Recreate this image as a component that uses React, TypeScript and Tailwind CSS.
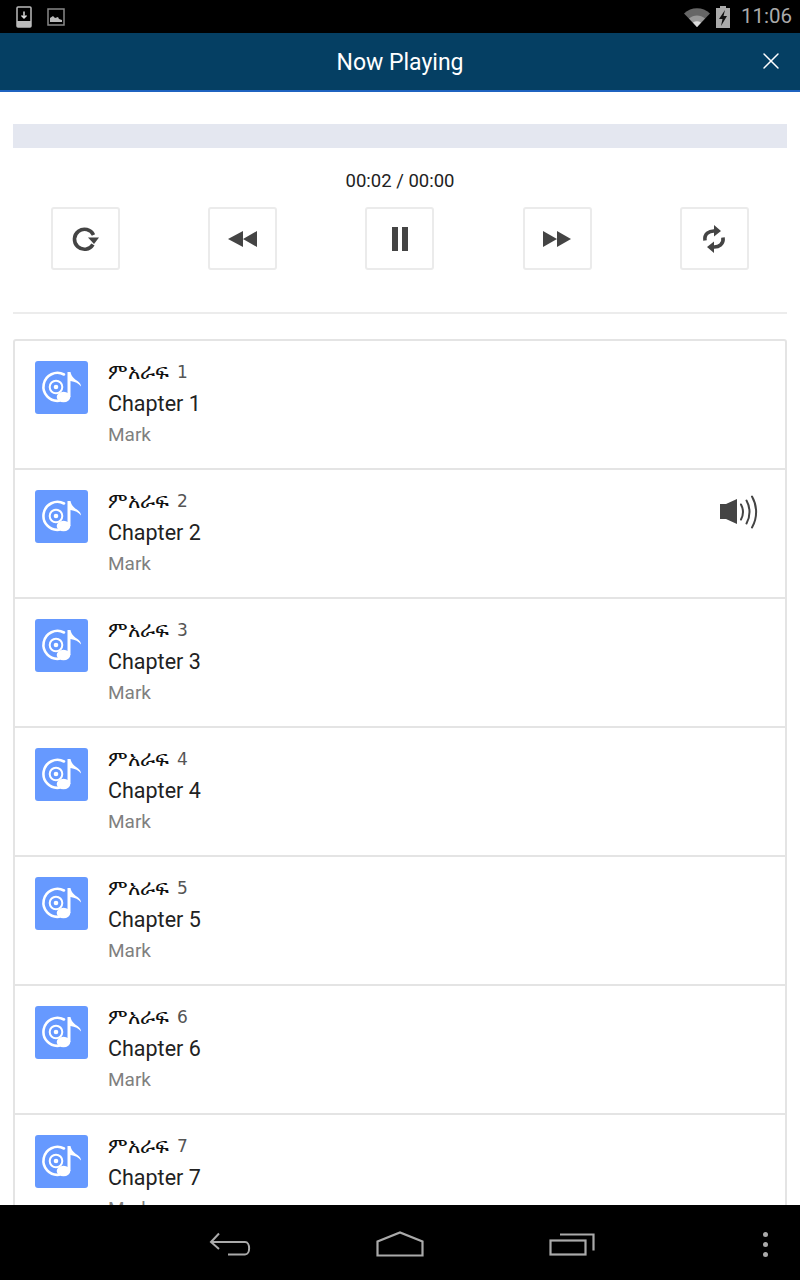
import React from 'react';
import { X } from 'lucide-react';

const chapters = [1, 2, 3, 4, 5, 6, 7];

function DiscNote() {
  return (
    <div className="w-[53px] h-[53px] shrink-0 rounded-[3px] bg-[#6699ff]">
      <svg viewBox="0 0 53 53" className="w-[53px] h-[53px]" fill="none">
        <path d="M29 13.500A14 14 0 1 0 24 39.800" stroke="#fff" strokeWidth="2.600" strokeLinecap="round" />
        <circle cx="21" cy="26" r="6.300" stroke="#fff" strokeWidth="2" />
        <circle cx="21" cy="26" r="2.300" fill="#fff" />
        <path d="M32.500 11h3c1 4.800 4 7 7 9 2.200 1.500 3.500 3.200 3.500 5.500-2.200-3-6-5-10.500-5.500V36h-3z" fill="#fff" />
        <ellipse cx="28.500" cy="36" rx="6.800" ry="5.200" fill="#fff" />
      </svg>
    </div>
  );
}

function PlayerButton({ children }: { children: React.ReactNode }) {
  return (
    <div className="w-[69px] h-[63px] flex items-center justify-center border-2 border-[#ebebeb] rounded-[3px]">
      {children}
    </div>
  );
}

function ChapterRow({ n }: { n: number }) {
  return (
    <div className="relative flex h-[129px] shrink-0 pl-5 pt-5 border-b-2 border-[#e4e4e4] last:border-b-0">
      <DiscNote />
      <div className="ml-5 -mt-[4px]">
        <div className="h-[32px] flex items-center text-[#222]">
          <span className="text-[21px] text-[#111]">ምአራፍ</span>
          <span className="ml-[8px] text-[#555] font-['DejaVu_Sans'] text-[17px]">{n}</span>
        </div>
        <div className="h-[31px] flex items-center text-[21.5px] text-[#222]">Chapter {n}</div>
        <div className="h-[31px] flex items-center text-[19px] text-[#808080]">Mark</div>
      </div>
      {n === 2 && (
        <svg viewBox="0 0 40 36" className="absolute right-[26px] top-[24px] w-[40px] h-[36px]" fill="none">
          <path d="M1 10h6L18 5v25L7 25H1z" fill="#444" />
          <path d="M22 10.500c2.400 4.500 2.400 10.500 0 15" stroke="#444" strokeWidth="2" strokeLinecap="round" />
          <path d="M27.500 6.500c4 7 4 16 0 23" stroke="#444" strokeWidth="2" strokeLinecap="round" />
          <path d="M33 2.500c5.500 9.500 5.500 21.500 0 31" stroke="#444" strokeWidth="2" strokeLinecap="round" />
        </svg>
      )}
    </div>
  );
}

export default function App() {
  return (
    <div className="w-[800px] h-[1280px] flex flex-col overflow-hidden bg-white font-['Roboto',sans-serif]">
      {/* status bar */}
      <div className="h-[33px] shrink-0 bg-black flex items-center pl-[16px] pr-[8px]">
        <svg viewBox="0 0 16 22" className="w-[16px] h-[22px]" fill="none">
          <rect x="1" y="1" width="14" height="20" rx="1" stroke="#bbb" strokeWidth="1.500" />
          <rect x="1" y="15" width="14" height="6" fill="#bbb" />
          <path d="M8 5.500v6M5.500 9.500L8 12l2.500-2.500" stroke="#ddd" strokeWidth="1.500" />
        </svg>
        <svg viewBox="0 0 18 18" className="ml-[15px] w-[18px] h-[18px]" fill="none">
          <rect x="1" y="1" width="16" height="16" stroke="#888" strokeWidth="1.500" />
          <path d="M3 14v-4l3-2 2 2 3-1 1 2 3 1v2z" fill="#bbb" />
        </svg>
        <div className="ml-auto flex items-center">
          <svg viewBox="0 0 26 20" className="w-[26px] h-[20px]">
            <path d="M0 6.500C7-.500 19-.500 26 6.500L13 20z" fill="#666" />
            <path d="M5 11.500c4.500-4 11.500-4 16 0L13 20z" fill="#999" />
            <path d="M9 15.500c2.500-1.600 5.500-1.600 8 0L13 20z" fill="#ddd" />
          </svg>
          <svg viewBox="0 0 14 22" className="ml-[6px] w-[14px] h-[22px]">
            <path d="M4 0h6v2h4v20H0V2h4z" fill="#aaa" />
            <path d="M9 4L3 13h3.500L5 20l6-10H7.500z" fill="#111" />
          </svg>
          <span className="ml-[11px] text-[20.5px] leading-none text-[#aaa]">11:06</span>
        </div>
      </div>

      {/* header */}
      <div className="relative h-[59px] shrink-0 pt-[3px] bg-[#053f63] border-b-2 border-[#1f63c0] flex items-center justify-center">
        <span className="text-[23px] text-white">Now Playing</span>
        <X className="absolute right-[15px] top-[14px] w-[28px] h-[28px] text-white" strokeWidth={1.250} />
      </div>

      {/* player */}
      <div className="flex-1 min-h-0 overflow-hidden px-[13px] pt-[32px]">
        <div className="h-[24px] bg-[#e4e7f0]" />
        <div className="mt-[22px] h-[24px] flex items-center justify-center text-[18.500px] text-[#222]">00:02 / 00:00</div>
        <div className="mt-[13px] pl-[37.800px] pr-[38px] flex justify-between">
          <PlayerButton>
            <svg viewBox="0 0 28 26" className="w-[28px] h-[26px]" fill="none">
              <path d="M22 18.500A10 10 0 1 1 22.500 9" stroke="#444" strokeWidth="3.600" />
              <path d="M28 11.500H17l6 6.500z" fill="#444" />
            </svg>
          </PlayerButton>
          <PlayerButton>
            <svg viewBox="0 0 30 18" className="w-[30px] h-[18px]">
              <path d="M0 9L15 1v16zM15 9L29 1v16z" fill="#444" />
            </svg>
          </PlayerButton>
          <PlayerButton>
            <div className="flex gap-[4px]">
              <div className="w-[6px] h-[24px] bg-[#444]" />
              <div className="w-[6px] h-[24px] bg-[#444]" />
            </div>
          </PlayerButton>
          <PlayerButton>
            <svg viewBox="0 0 30 18" className="w-[30px] h-[18px]">
              <path d="M1 1l14 8-14 8zM15 1l14 8-14 8z" fill="#444" />
            </svg>
          </PlayerButton>
          <PlayerButton>
            <svg viewBox="0 0 24 28" className="w-[24px] h-[28px]" fill="none">
              <path d="M3 15.500C2 9 7 5.500 13 6M21 12.500c1 6.500-4 10-10 9.500" stroke="#444" strokeWidth="3.600" />
              <path d="M12 0l7 6-7 5.500zM12 28l-7-6 7-5.500z" fill="#444" />
            </svg>
          </PlayerButton>
        </div>
        <div className="mt-[42px] h-[2px] bg-[#ececec]" />

        {/* list */}
        <div className="mt-[25px] border-2 border-[#e4e4e4] rounded-[3px] flex flex-col">
          {chapters.map((n) => (
            <ChapterRow key={n} n={n} />
          ))}
        </div>
      </div>

      {/* nav bar */}
      <div className="relative h-[75px] shrink-0 bg-black flex items-center justify-center">
        <svg viewBox="0 0 44 26" className="absolute left-[208px] top-[26px] w-[44px] h-[26px]" fill="none">
          <path d="M11 2.500L3 11l8 7M3 11h34c5.500 0 5.500 12.500 0 12.500H20" stroke="#aaa" strokeWidth="2" />
        </svg>
        <svg viewBox="0 0 48 26" className="absolute left-[376px] top-[26px] w-[48px] h-[26px]" fill="none">
          <path d="M1.500 24.500V10.500L24 1.500l22.500 9v14z" stroke="#aaa" strokeWidth="2.200" />
        </svg>
        <svg viewBox="0 0 46 26" className="absolute left-[549px] top-[27px] w-[46px] h-[26px]" fill="none">
          <rect x="1.500" y="8.500" width="35" height="14" stroke="#aaa" strokeWidth="2.200" />
          <path d="M11 2.500h33.500v16" stroke="#aaa" strokeWidth="2.200" />
        </svg>
        <div className="absolute left-[763px] top-[27px] flex flex-col gap-[5px]">
          <div className="w-[5px] h-[5px] rounded-full bg-[#aaa]" />
          <div className="w-[5px] h-[5px] rounded-full bg-[#aaa]" />
          <div className="w-[5px] h-[5px] rounded-full bg-[#aaa]" />
        </div>
      </div>
    </div>
  );
}
